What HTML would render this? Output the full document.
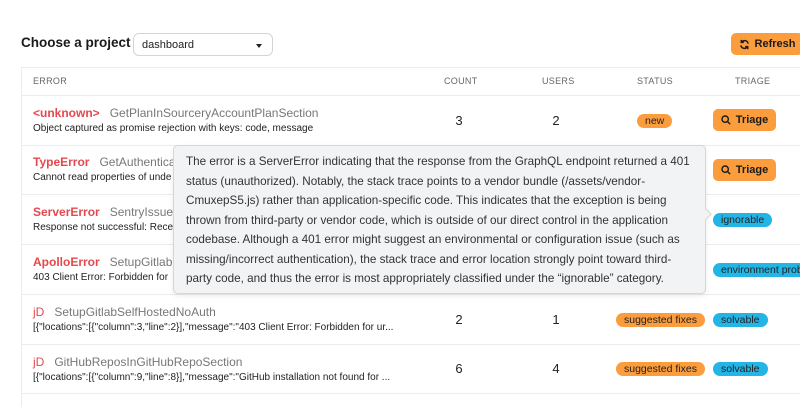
<!DOCTYPE html>
<html><head><meta charset="utf-8"><style>
*{box-sizing:border-box;margin:0;padding:0}
body{width:800px;height:405px;overflow:hidden;background:#fff;font-family:"Liberation Sans",sans-serif;position:relative;color:#222}
h1{position:absolute;left:21px;top:35px;font-size:13.5px;font-weight:bold;color:#1a1a1a}
.sel{position:absolute;left:133px;top:33px;width:140px;height:23px;border:1px solid #d4d4d4;border-radius:6px;font-size:11px;padding:5px 8px;color:#222}
.sel:after{content:"";position:absolute;right:10px;top:10px;border:3.5px solid transparent;border-top:4px solid #222}
.btn{position:absolute;background:#fb9d3c;border-radius:5px;font-weight:bold;font-size:11px;color:#1a1a1a;display:flex;align-items:center;justify-content:center;gap:5px}
.tbl{position:absolute;left:21px;top:67px;width:800px;height:340px;border-left:1px solid #ececec;border-top:1px solid #ececec}
.row{position:absolute;left:22px;width:780px;border-bottom:1px solid #ececec}
.hd{position:absolute;top:76px;font-size:9px;color:#666;letter-spacing:.3px}
.t1{position:absolute;left:33px;font-size:12px;white-space:nowrap}
.t1 b{color:#e5484d;font-weight:bold}
.t1 span{color:#777;margin-left:10px}
.jd b{font-weight:normal}
.t2{position:absolute;left:33px;font-size:10px;color:#222;white-space:nowrap}
.num{position:absolute;font-size:13px;width:40px;text-align:center}
.pill{position:absolute;height:14px;border-radius:7px;font-size:10.5px;padding:0 8px;color:#222;display:flex;align-items:center;white-space:nowrap}
.o{background:#fb9d3c}.c{background:#22b5e5}
.tip{position:absolute;left:173px;top:145px;width:533px;height:149px;background:#f2f3f5;border:1px solid #d6d6d8;border-radius:5px;padding:6px 12px 0 12px;font-size:11.7px;line-height:19.5px;color:#333;box-shadow:0 2px 6px rgba(0,0,0,.08);white-space:nowrap}
.arr{position:absolute;left:705px;top:213px;width:8px;height:8px;background:#f2f3f5;border-top:1px solid #d6d6d8;border-right:1px solid #d6d6d8;transform:rotate(45deg) translate(-4px,0)}
</style></head><body>
<h1>Choose a project</h1>
<div class="sel">dashboard</div>
<div class="btn" style="left:731px;top:33px;width:72px;height:22px"><svg width="11" height="11" viewBox="0 0 12 12" fill="none" stroke="#1a1a1a" stroke-width="1.6"><path d="M10 5A4 4 0 0 0 2.8 3.5M2 7a4 4 0 0 0 7.2 1.5"/><path d="M2.5 1v2.7h2.7M9.5 11V8.3H6.8"/></svg>Refresh</div>
<div class="tbl"></div>
<div class="hd" style="left:33px">ERROR</div>
<div class="hd" style="left:444px">COUNT</div>
<div class="hd" style="left:542px">USERS</div>
<div class="hd" style="left:637px">STATUS</div>
<div class="hd" style="left:735px">TRIAGE</div>
<div class="row" style="top:67px;height:29px"></div>
<div class="row" style="top:96px;height:50px"></div>
<div class="row" style="top:146px;height:49px"></div>
<div class="row" style="top:195px;height:50px"></div>
<div class="row" style="top:245px;height:50px"></div>
<div class="row" style="top:295px;height:50px"></div>
<div class="row" style="top:345px;height:49px"></div>

<div class="t1" style="top:106px"><b>&lt;unknown&gt;</b><span>GetPlanInSourceryAccountPlanSection</span></div>
<div class="t2" style="top:123px">Object captured as promise rejection with keys: code, message</div>
<div class="num" style="left:439px;top:113px">3</div><div class="num" style="left:536px;top:113px">2</div>
<div class="pill o" style="left:637px;top:114px">new</div>
<div class="btn" style="left:713px;top:109px;width:63px;height:22px"><svg width="10" height="10" viewBox="0 0 12 12" fill="none" stroke="#1a1a1a" stroke-width="1.7"><circle cx="5" cy="5" r="3.8"/><path d="M8 8l3 3"/></svg>Triage</div>

<div class="t1" style="top:155px"><b>TypeError</b><span>GetAuthentica</span></div>
<div class="t2" style="top:172px">Cannot read properties of unde</div>
<div class="btn" style="left:713px;top:159px;width:63px;height:22px"><svg width="10" height="10" viewBox="0 0 12 12" fill="none" stroke="#1a1a1a" stroke-width="1.7"><circle cx="5" cy="5" r="3.8"/><path d="M8 8l3 3"/></svg>Triage</div>

<div class="t1" style="top:205px"><b>ServerError</b><span>SentryIssues</span></div>
<div class="t2" style="top:222px">Response not successful: Rece</div>
<div class="pill c" style="left:713px;top:213px">ignorable</div>

<div class="t1" style="top:255px"><b>ApolloError</b><span>SetupGitlabS</span></div>
<div class="t2" style="top:272px">403 Client Error: Forbidden for</div>
<div class="pill c" style="left:713px;top:263px">environment problem</div>

<div class="t1 jd" style="top:305px"><b>jD</b><span>SetupGitlabSelfHostedNoAuth</span></div>
<div class="t2" style="top:322px">[{"locations":[{"column":3,"line":2}],"message":"403 Client Error: Forbidden for ur...</div>
<div class="num" style="left:439px;top:312px">2</div><div class="num" style="left:536px;top:312px">1</div>
<div class="pill o" style="left:616px;top:313px">suggested fixes</div>
<div class="pill c" style="left:713px;top:313px">solvable</div>

<div class="t1 jd" style="top:355px"><b>jD</b><span>GitHubReposInGitHubRepoSection</span></div>
<div class="t2" style="top:372px">[{"locations":[{"column":9,"line":8}],"message":"GitHub installation not found for ...</div>
<div class="num" style="left:439px;top:361px">6</div><div class="num" style="left:536px;top:361px">4</div>
<div class="pill o" style="left:616px;top:362px">suggested fixes</div>
<div class="pill c" style="left:713px;top:362px">solvable</div>

<div class="tip">The error is a ServerError indicating that the response from the GraphQL endpoint returned a 401<br>status (unauthorized). Notably, the stack trace points to a vendor bundle (/assets/vendor-<br>CmuxepS5.js) rather than application-specific code. This indicates that the exception is being<br>thrown from third-party or vendor code, which is outside of our direct control in the application<br>codebase. Although a 401 error might suggest an environmental or configuration issue (such as<br>missing/incorrect authentication), the stack trace and error location strongly point toward third-<br>party code, and thus the error is most appropriately classified under the “ignorable” category.</div>
<div class="arr"></div>
</body></html>
